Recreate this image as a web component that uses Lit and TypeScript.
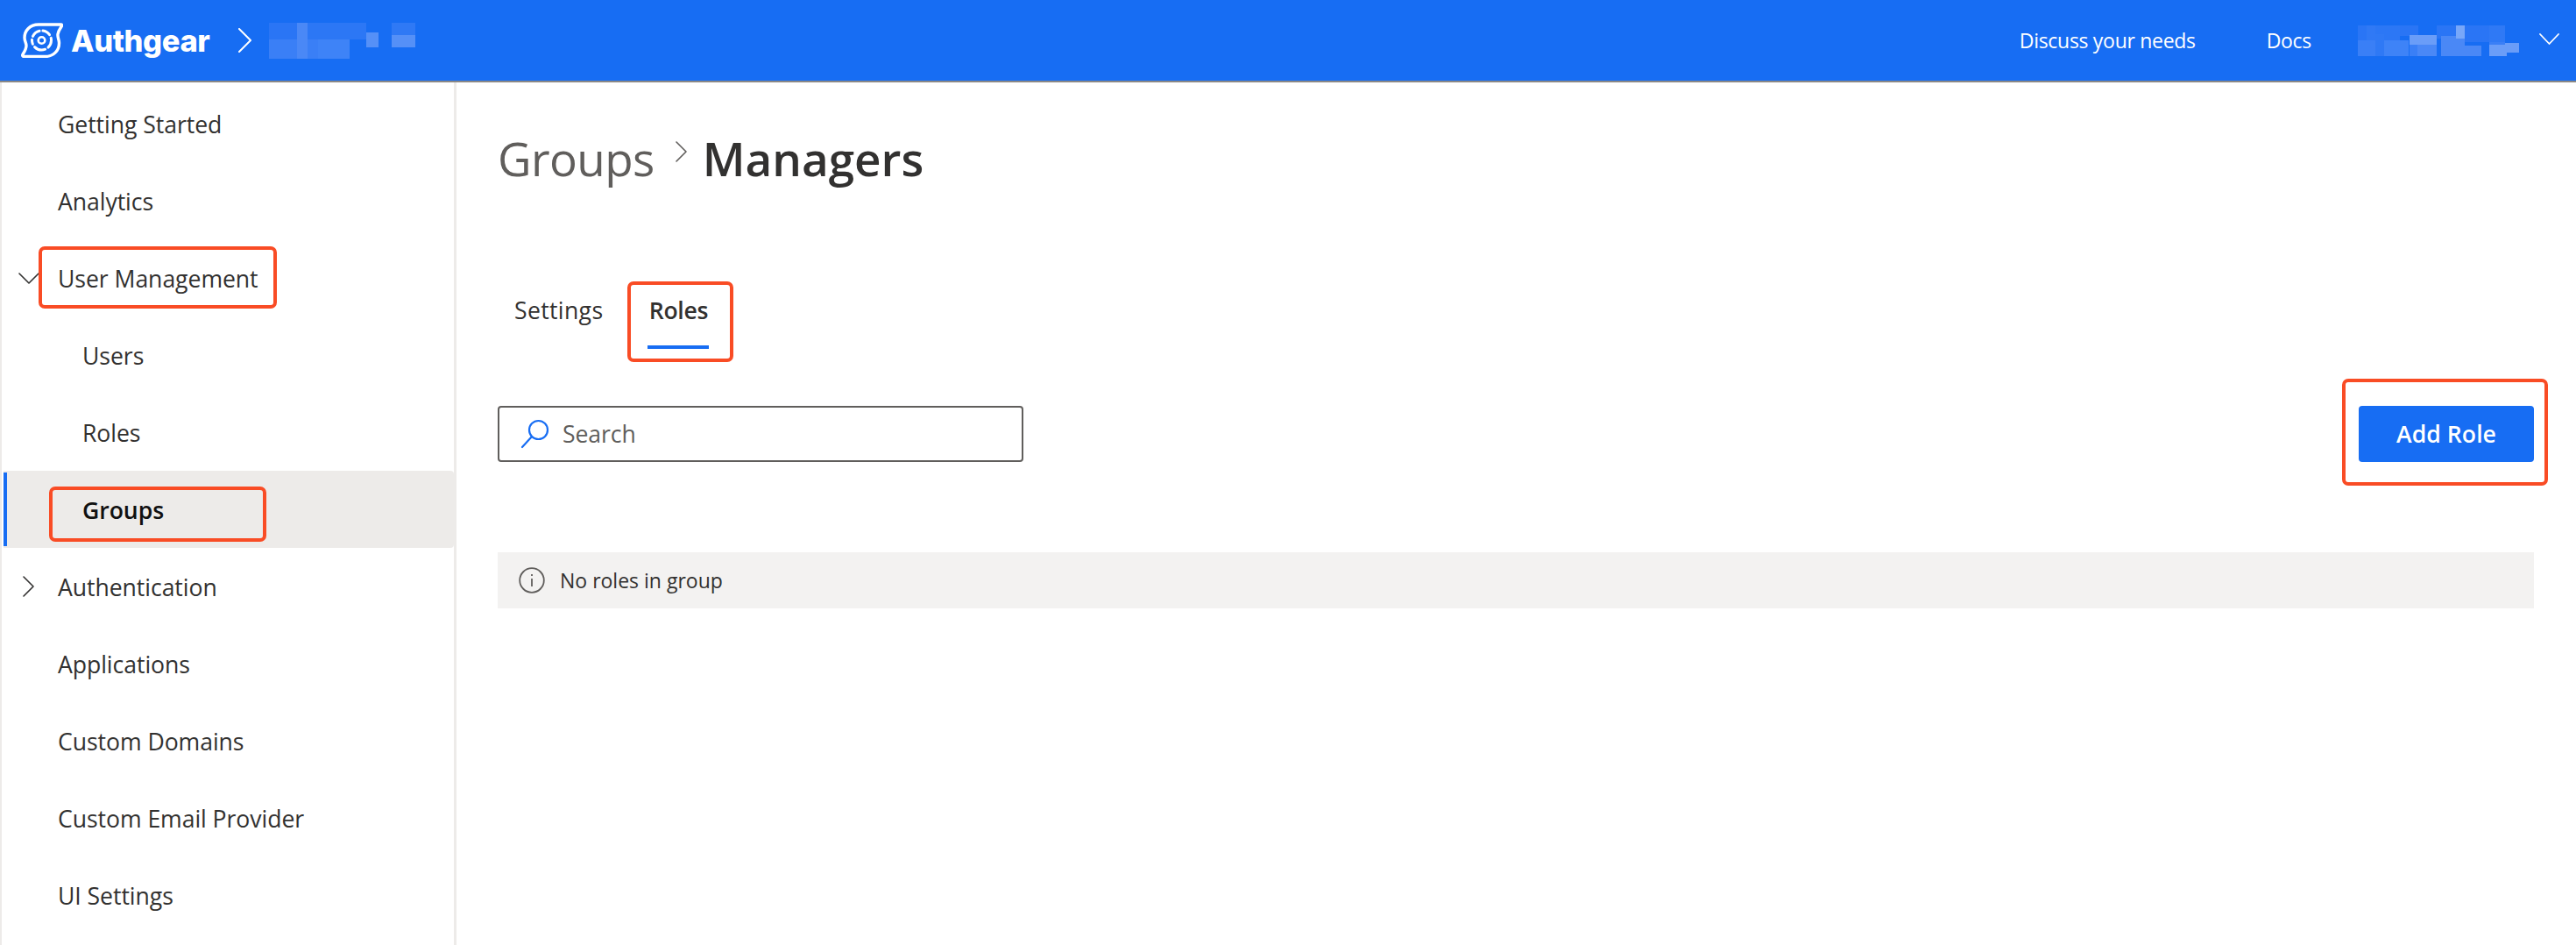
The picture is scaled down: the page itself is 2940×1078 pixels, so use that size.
import { LitElement, html, css, svg } from "lit";
import { customElement } from "lit/decorators.js";

const chevron = (dir: "right" | "down", w: number, h: number, color: string, sw = 1.6) => {
  const d = dir === "right" ? `M1 1 L${w - 1} ${h / 2} L1 ${h - 1}` : `M1 1 L${w / 2} ${h - 1} L${w - 1} 1`;
  return html`<svg width=${w} height=${h} viewBox="0 0 ${w} ${h}" fill="none">
    <path d=${d} stroke=${color} stroke-width=${sw} stroke-linecap="round" stroke-linejoin="round"></path>
  </svg>`;
};

type Cell = [number, number, number, number, string];
const leftBlur: Cell[] = [
  [0, 0, 32, 19, "#2a75f5"], [32, 0, 12, 41, "#4a88f6"], [44, 0, 67, 19, "#2c77f5"],
  [0, 19, 32, 22, "#3a7ff6"], [44, 19, 12, 22, "#3a7ff6"], [56, 19, 36, 22, "#3e83f7"],
  [111, 11, 14, 17, "#5590f7"], [140, 0, 27, 14, "#2f79f5"],
  [140, 14, 27, 14, "#5590f7"],
];
const rightBlur: Cell[] = [
  [0, 0, 10, 17, "#2a75f5"], [10, 0, 10, 17, "#3079f5"], [20, 0, 28, 17, "#2c77f5"], [48, 0, 21, 12, "#2a75f5"],
  [0, 17, 20, 18, "#3a7ff6"], [20, 10, 10, 25, "#2f79f5"], [30, 17, 28, 18, "#3e83f7"], [59, 11, 9, 24, "#3a7ff6"],
  [59, 11, 9, 11, "#6a9df8"], [68, 11, 9, 11, "#6a9df8"], [68, 22, 9, 13, "#4a88f6"], [77, 11, 13, 11, "#6a9df8"],
  [77, 22, 13, 13, "#4a88f6"], [90, 0, 27, 15, "#2a75f5"], [95, 12, 27, 23, "#4a88f6"], [122, 23, 19, 12, "#4a88f6"],
  [112, 0, 10, 15, "#78a7f9"], [122, 0, 30, 19, "#2a75f5"], [150, 0, 18, 19, "#2f79f5"], [150, 19, 18, 11, "#3a7ff6"],
  [168, 20, 16, 11, "#6a9df8"], [150, 22, 20, 13, "#6a9df8"],
];
const blurBlock = (cells: Cell[], w: number, h: number) =>
  html`<svg width=${w} height=${h} viewBox="0 0 ${w} ${h}">
    ${cells.map(([x, y, cw, ch, c]) => svg`<rect x=${x} y=${y} width=${cw} height=${ch} fill=${c}></rect>`)}
  </svg>`;

@customElement("app-root")
export class AppRoot extends LitElement {
  static styles = css`
    :host {
      display: flex;
      flex-direction: column;
      width: 100%;
      height: 1078px;
      overflow: hidden;
      background: #fff;
      color: #323130;
      font-family: "Open Sans", "Noto Sans", sans-serif;
      font-size: 26.6px;
    }
    .top {
      flex: none;
      height: 92px;
      background: #176df3;
      border-bottom: 2px solid #8a8886;
      display: flex;
      align-items: center;
      color: #fff;
      padding-left: 24px;
    }
    .logo { display: block; flex: none; }
    .brand {
      font-family: "Inter", sans-serif;
      font-weight: 800;
      font-size: 34.5px;
      letter-spacing: -0.4px;
      margin-left: 9px;
      width: 168px;
    }
    .crumbchev { display: flex; margin-left: 23px; }
    .blurL { display: flex; margin-left: 20px; margin-top: 1px; }
    .spacer { flex: 1; }
    .toplink { font-size: 23px; letter-spacing: -0.3px; white-space: nowrap; }
    .discuss { margin-right: 81px; }
    .docs { margin-right: 53px; }
    .blurR { display: flex; margin-top: 1px; margin-right: 17px; }
    .userchev { display: flex; margin-right: 19px; margin-top: -3px; }

    .body { flex: 1; display: flex; min-height: 0; }
    .side {
      flex: none;
      width: 521px;
      box-sizing: border-box;
      border-left: 2px solid #edebe9;
      border-right: 3px solid #edebe9;
      padding-top: 3px;
      overflow: hidden;
    }
    .row {
      height: 88px;
      display: flex;
      align-items: center;
      position: relative;
    }
    .caret { flex: none; width: 64px; display: flex; }
    .caret.r { padding-left: 24px; box-sizing: border-box; }
    .caret.d { padding-left: 19px; box-sizing: border-box; }
    .label { white-space: nowrap; letter-spacing: -0.05px; line-height: 1; margin-top: 2px; }
    .sub .label { margin-left: 28px; }
    .row.active {
      background: #edebe9;
      margin-left: 2px;
      border-radius: 0 4px 4px 0;
    }
    .row.active .caret { width: 62px; }
    .row.active .label { font-weight: 600; color: #111; }
    .activebar { position: absolute; left: 0; top: 2px; bottom: 2px; width: 4px; background: #176df3; }
    .mark {
      position: absolute;
      box-sizing: border-box;
      border: 4px solid #f94c25;
      border-radius: 7px;
      pointer-events: none;
    }
    .mark.um { left: 42px; top: 8px; width: 272px; height: 71px; }
    .mark.gr { left: 52px; top: 18px; width: 248px; height: 63px; }

    .main {
      flex: 1;
      min-width: 0;
      padding: 49px 48px 0 47px;
    }
    .title { display: flex; align-items: center; height: 76px; font-size: 53px; line-height: 76px; white-space: nowrap; }
    .title .g { color: #605e5c; letter-spacing: -0.6px; }
    .title .chev { display: flex; margin: -16px 18px 0 24px; }
    .title .m { font-weight: 600; color: #323130; }

    .tabs { display: flex; margin-top: 92px; padding-left: 19px; }
    .tab { position: relative; display: flex; flex-direction: column; align-items: center; height: 88px; font-size: 26.6px; letter-spacing: 0.35px; }
    .tab span { height: 83px; line-height: 86px; }
    .tab + .tab { margin-left: 50px; }
    .tab.on { font-weight: 600; padding: 0 1px; letter-spacing: -0.3px; }
    .tab.on .bar { width: 70px; height: 4px; background: #176df3; }
    .mark.tb { left: -22px; top: 10px; width: 121px; height: 92px; }

    .tools { display: flex; justify-content: space-between; margin-top: 64px; }
    .search {
      box-sizing: border-box;
      width: 600px;
      height: 64px;
      border: 2px solid #605e5c;
      border-radius: 4px;
      display: flex;
      align-items: center;
      padding-left: 24px;
      color: #605e5c;
    }
    .search svg { display: block; }
    .search span { margin-left: 14px; letter-spacing: -0.1px; }
    .btnwrap { position: relative; }
    .btn {
      width: 200px;
      height: 64px;
      box-sizing: border-box;
      border: none;
      border-radius: 4px;
      background: #176df3;
      color: #fff;
      font: 600 26.6px "Open Sans", sans-serif;
      letter-spacing: 0.05px;
      display: flex;
      align-items: center;
      justify-content: center;
    }
    .mark.ad { left: -19px; top: -31px; width: 235px; height: 122px; }

    .info {
      margin-top: 103px;
      height: 64px;
      background: #f3f2f1;
      display: flex;
      align-items: center;
      padding-left: 24px;
      font-size: 23px;
      letter-spacing: 0;
    }
    .info svg { display: block; }
    .info span { margin-left: 17px; }
  `;

  private row(label: string, opts: { caret?: "r" | "d"; sub?: boolean; active?: boolean; mark?: string } = {}) {
    const cls = `row${opts.sub ? " sub" : ""}${opts.active ? " active" : ""}`;
    return html`<div class=${cls}>
      ${opts.active ? html`<div class="activebar"></div>` : ""}
      <div class="caret ${opts.caret ?? ""}">
        ${opts.caret === "r" ? chevron("right", 13, 24, "#323130") : ""}
        ${opts.caret === "d" ? chevron("down", 24, 13, "#323130") : ""}
      </div>
      <div class="label">${label}</div>
      ${opts.mark ? html`<div class="mark ${opts.mark}"></div>` : ""}
    </div>`;
  }

  render() {
    return html`
      <div class="top">
        <svg class="logo" width="48" height="40" viewBox="0 0 48 40" fill="none" stroke="#fff" stroke-linecap="round">
          <path stroke-width="3.4" stroke-linejoin="round" d="M45.5 2 H20 C10 2 4 9 4 17 C4 21 6 23 6 26 C6 30 4 33 2 36 C1.2 37.5 2 38.5 3.5 38.5 H27 C37 38.5 43.5 32 43.5 23 C43.5 19 41.5 17 42 13 C42.5 9 44.5 7 46.3 4 C47 2.8 46.8 2 45.5 2 Z"></path>
          <circle cx="23.5" cy="20" r="3.8" stroke-width="2.6"></circle>
          <circle cx="23.5" cy="20" r="11" stroke-width="3" stroke-dasharray="9 4 13 4 5 4 10 4"></circle>
        </svg>
        <div class="brand">Authgear</div>
        <div class="crumbchev">${chevron("right", 15, 28, "#fff", 2)}</div>
        <div class="blurL">${blurBlock(leftBlur, 167, 41)}</div>
        <div class="spacer"></div>
        <div class="toplink discuss">Discuss your needs</div>
        <div class="toplink docs">Docs</div>
        <div class="blurR">${blurBlock(rightBlur, 190, 35)}</div>
        <div class="userchev">${chevron("down", 23, 13, "#fff", 1.8)}</div>
      </div>
      <div class="body">
        <nav class="side">
          ${this.row("Getting Started")}
          ${this.row("Analytics")}
          ${this.row("User Management", { caret: "d", mark: "um" })}
          ${this.row("Users", { sub: true })}
          ${this.row("Roles", { sub: true })}
          ${this.row("Groups", { sub: true, active: true, mark: "gr" })}
          ${this.row("Authentication", { caret: "r" })}
          ${this.row("Applications")}
          ${this.row("Custom Domains")}
          ${this.row("Custom Email Provider")}
          ${this.row("UI Settings")}
        </nav>
        <main class="main">
          <div class="title">
            <span class="g">Groups</span>
            <span class="chev">${chevron("right", 13, 24, "#605e5c")}</span>
            <span class="m">Managers</span>
          </div>
          <div class="tabs">
            <div class="tab"><span>Settings</span></div>
            <div class="tab on"><span>Roles</span><div class="bar"></div><div class="mark tb"></div></div>
          </div>
          <div class="tools">
            <div class="search">
              <svg width="34" height="34" viewBox="0 0 34 34" fill="none" stroke="#176df3" stroke-width="2.2" stroke-linecap="round">
                <circle cx="20.5" cy="12.5" r="10.5"></circle>
                <path d="M13 20 L2 32"></path>
              </svg>
              <span>Search</span>
            </div>
            <div class="btnwrap">
              <div class="btn">Add Role</div>
              <div class="mark ad"></div>
            </div>
          </div>
          <div class="info">
            <svg width="30" height="30" viewBox="0 0 30 30" fill="none" stroke="#605e5c" stroke-width="1.8">
              <circle cx="15" cy="15" r="13.8"></circle>
              <path d="M15 13 V22 M15 8 V10"></path>
            </svg>
            <span>No roles in group</span>
          </div>
        </main>
      </div>
    `;
  }
}
